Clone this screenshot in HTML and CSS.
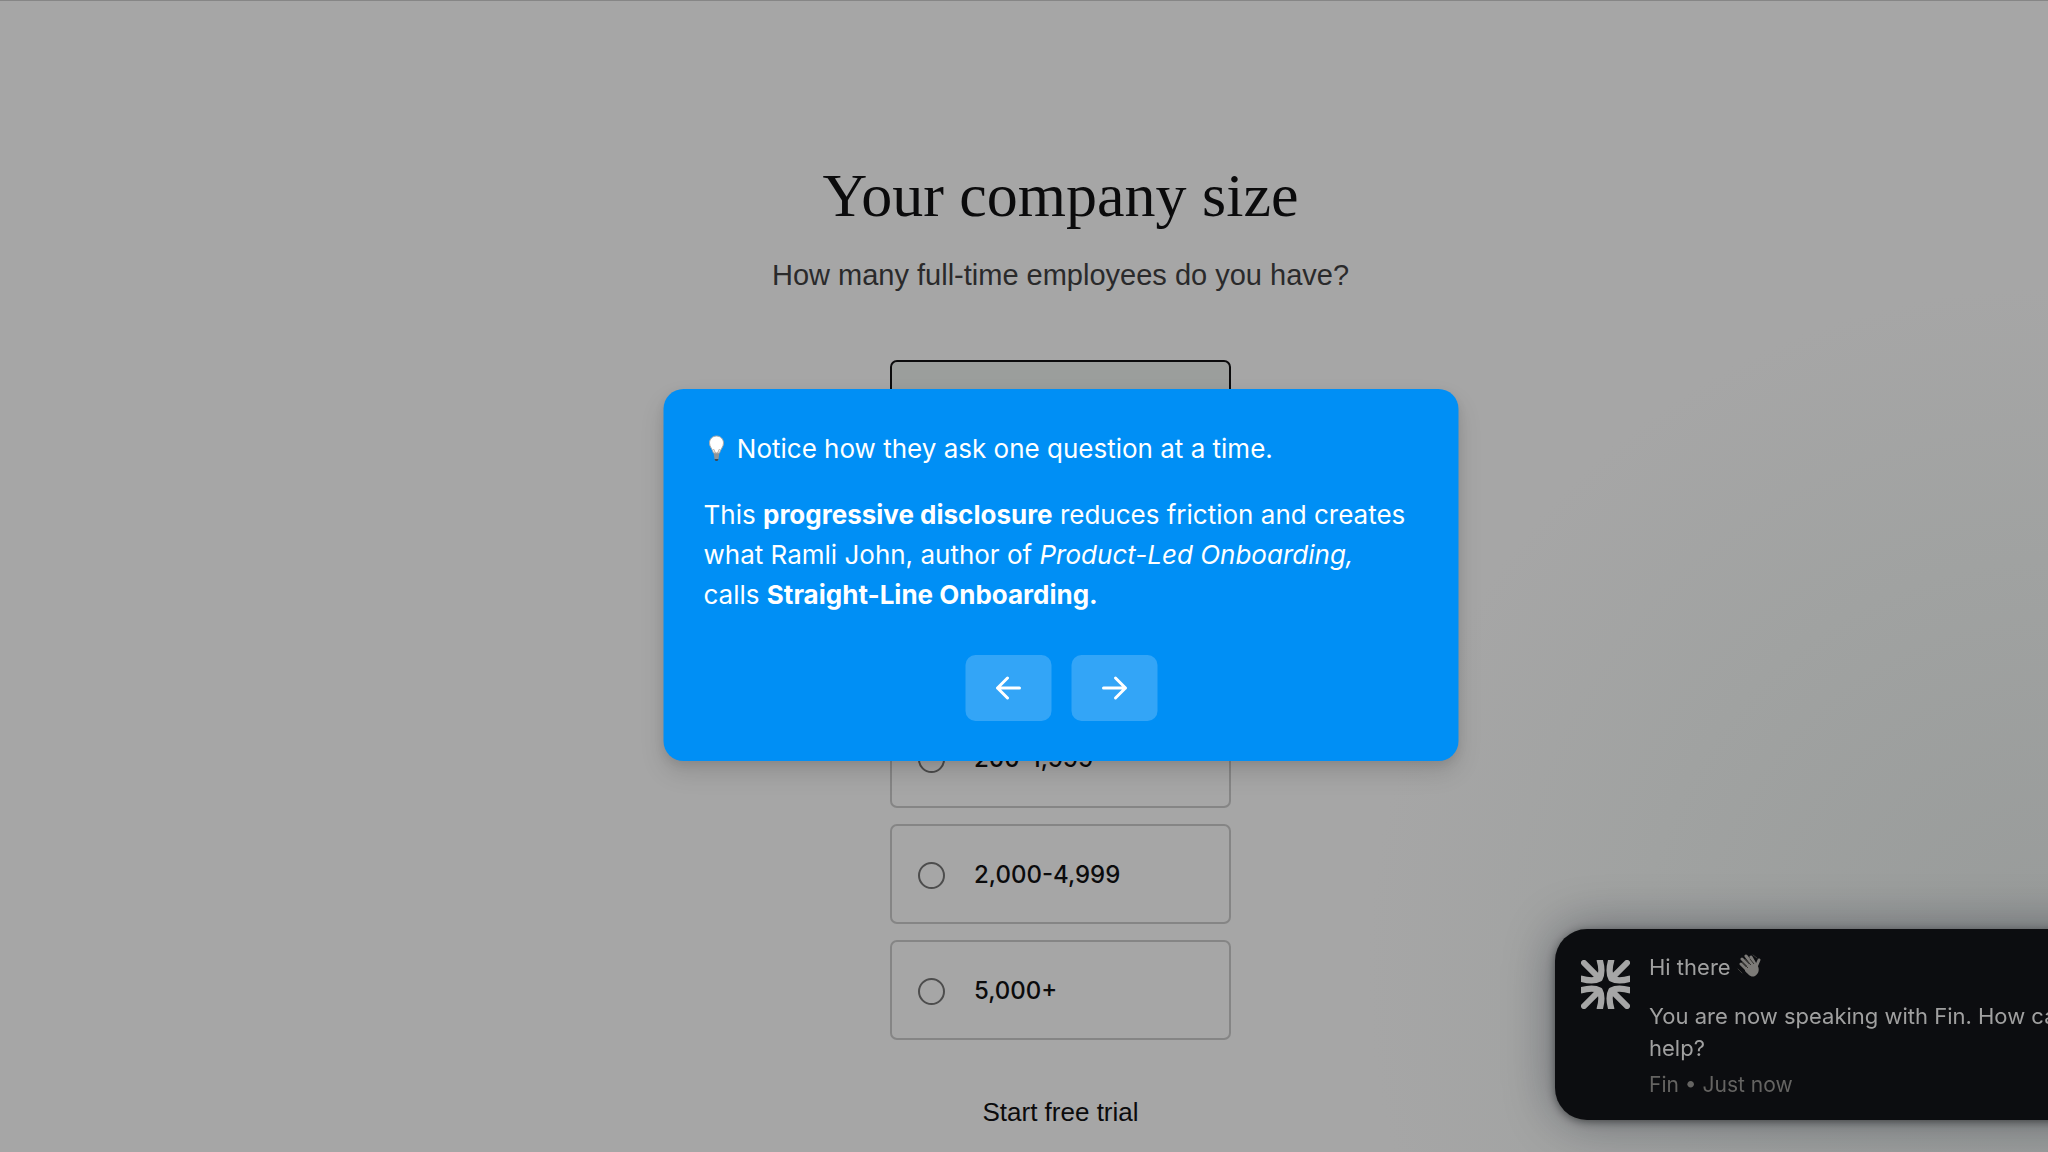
FILE: index.html
```html
<!DOCTYPE html>
<html lang="en">
<head>
  <meta charset="utf-8">
  <meta name="viewport" content="width=device-width, initial-scale=1">
  <title>Your company size</title>
  <link rel="stylesheet" href="styles.css">
</head>
<body>
  <main class="page">
    <h1 class="title">Your company size</h1>
    <p class="subtitle" id="question">How many full-time employees do you have?</p>
    <form class="form">
      <div class="options" role="radiogroup" aria-labelledby="question">
        <label class="option option-selected"><input class="radio" type="radio" name="size" aria-label="1-4" checked></label>
        <label class="option"><input class="radio" type="radio" name="size" aria-label="5-49"></label>
        <label class="option"><input class="radio" type="radio" name="size" aria-label="50-199"></label>
        <label class="option"><input class="radio" type="radio" name="size"><span>200-1,999</span></label>
        <label class="option"><input class="radio" type="radio" name="size"><span>2,000-4,999</span></label>
        <label class="option"><input class="radio" type="radio" name="size"><span>5,000+</span></label>
      </div>
      <button class="start" type="button">Start free trial</button>
    </form>
  </main>

  <aside class="chat">
    <svg class="chat-logo" viewBox="0 0 148 148" aria-hidden="true">
      <defs>
        <g id="ray" fill="none" stroke="#a6a6a6">
          <path stroke-width="18" stroke-linecap="round" d="M9 9L52 52"/>
          <path stroke-width="19" d="M56 -2C63 22 63 44 56 56C44 63 22 63 -2 56"/>
        </g>
      </defs>
      <use href="#ray"/>
      <use href="#ray" transform="matrix(-1 0 0 1 148 0)"/>
      <use href="#ray" transform="matrix(1 0 0 -1 0 148)"/>
      <use href="#ray" transform="matrix(-1 0 0 -1 148 148)"/>
    </svg>
    <div class="chat-body">
      <p class="chat-greeting">Hi there
        <svg class="wave" viewBox="0 0 24 24" aria-hidden="true">
          <g fill="none" stroke="#7d7b78" stroke-linecap="round">
            <path stroke-width="3" d="M4 10L11 17M5 5L13 13M9 2L16 11M14 3L18 10"/>
            <path stroke-width="3" d="M19 13L22 6"/>
            <path stroke="#3c3b39" stroke-width="1" d="M1 15L5 19M16 1L20 4"/>
          </g>
          <path fill="#7d7b78" d="M8 14L15 8L20 11C23 14 22 20 18 22C14 24 11 20 8 17Z"/>
          <path fill="none" stroke="#34332f" stroke-width="1" d="M5 8L11 14M8 5L14 11M13 5L17 10"/>
        </svg>
      </p>
      <p class="chat-message">You are now speaking with Fin. How can I help?</p>
      <p class="chat-meta">Fin • Just now</p>
    </div>
  </aside>

  <section class="tip" role="dialog" aria-label="Tip">
    <p class="tip-text"><svg class="bulb" viewBox="0 0 26 26" aria-hidden="true">
        <path fill="#8d9499" d="M10 17H16L15 24Q13 27 11 24Z"/>
        <path fill="#fff" stroke="#a9a9a9" stroke-width="1" d="M13 1C9 1 6 4 6 8C6 12 9 14 10 18H16C17 14 20 12 20 8C20 4 17 1 13 1Z"/>
        <path fill="none" stroke="#b9a999" stroke-width="1" d="M10 14L12 18M16 14L14 18"/>
        <path fill="#3e4a54" d="M11 24H15L14 26H12Z"/>
      </svg> Notice how they ask one question at a time.</p>
    <p class="tip-text">This <strong>progressive disclosure</strong> reduces friction and creates what Ramli John, author of <em>Product-Led Onboarding,</em> calls <strong>Straight-Line Onboarding.</strong></p>
    <div class="tip-actions">
      <button class="tip-button" type="button" aria-label="Previous">
        <svg class="arrow" viewBox="0 0 26 26" aria-hidden="true"><path d="M24 13H2M12 3L2 13L12 23"/></svg>
      </button>
      <button class="tip-button" type="button" aria-label="Next">
        <svg class="arrow" viewBox="0 0 26 26" aria-hidden="true"><path d="M2 13H24M14 3L24 13L14 23"/></svg>
      </button>
    </div>
  </section>
</body>
</html>
```

FILE: styles.css
```css
* {
  box-sizing: border-box;
}

body {
  margin: 0;
  min-height: 100vh;
  overflow: hidden;
  border-top: 1px solid #868686;
  background:
    radial-gradient(circle 680px at 100% 84%, #989b9a 0%, #a0a2a1 60%, #a6a6a6 100%) #a6a6a6;
  color: #0b0b0c;
  font-family: Inter, "Liberation Sans", sans-serif;
}

h1,
p {
  margin: 0;
  font-weight: 400;
}

button {
  border: 0;
  background: none;
  color: inherit;
  cursor: pointer;
}

.page {
  display: flex;
  flex-direction: column;
  align-items: center;
  padding: 154px 0 0 73px;
}

.title {
  font-family: "Liberation Serif", serif;
  font-size: 62px;
  line-height: 80px;
}

.subtitle {
  margin-top: 20px;
  color: #2a2a2b;
  font-family: "Liberation Sans", sans-serif;
  font-size: 29px;
  line-height: 40px;
}

.form {
  display: flex;
  flex-direction: column;
  align-items: center;
  gap: 52px;
  margin-top: 65px;
}

.options {
  display: flex;
  flex-direction: column;
  gap: 16px;
  width: 341px;
}

.option {
  display: flex;
  align-items: center;
  gap: 29px;
  height: 100px;
  padding: 0 26px;
  border: 2px solid #858585;
  border-radius: 7px;
  font-size: 24px;
  font-weight: 500;
}

.option-selected {
  border-color: #0b0b0c;
  background: #9b9e9c;
}

.radio {
  appearance: none;
  width: 27px;
  height: 27px;
  margin: 2px 0 0;
  border: 2px solid #4d4d4d;
  border-radius: 50%;
}

.start {
  padding: 0;
  font-family: "Liberation Sans", sans-serif;
  font-size: 26px;
  line-height: 40px;
}

/* Tour step, laid over the page */
.tip {
  position: absolute;
  top: 389px;
  left: calc(50% + 37px);
  width: 795px;
  padding: 40px;
  transform: translateX(-50%);
  border-radius: 20px;
  background: #008ff5;
  box-shadow: 0 12px 24px rgba(0, 0, 0, 0.12), 0 4px 10px rgba(0, 0, 0, 0.08);
  color: #fff;
}

.tip-text {
  max-width: 708px;
  font-size: 26px;
  line-height: 40px;
}

.tip-text + .tip-text {
  margin-top: 26px;
}

.tip-text strong {
  font-weight: 700;
}

.bulb {
  width: 26px;
  height: 26px;
  vertical-align: -3px;
}

.tip-actions {
  display: flex;
  justify-content: center;
  gap: 20px;
  margin-top: 40px;
}

.tip-button {
  display: grid;
  place-items: center;
  width: 86px;
  height: 66px;
  border-radius: 10px;
  background: #33a5f7;
}

.arrow {
  width: 26px;
  height: 26px;
  fill: none;
  stroke: #fff;
  stroke-width: 3;
  stroke-linecap: round;
  stroke-linejoin: round;
}

/* Messenger notification, partly beyond the right edge */
.chat {
  position: fixed;
  right: -92px;
  bottom: 32px;
  display: flex;
  gap: 19px;
  width: 585px;
  padding: 22px 24px 19px 26px;
  border-radius: 32px;
  background: #0c0d10;
  box-shadow: 0 2px 8px rgba(0, 0, 0, 0.45), 0 0 50px rgba(10, 14, 30, 0.4);
  color: #a0a0a0;
  font-size: 22px;
  line-height: 32px;
}

.chat-logo {
  flex: none;
  width: 49px;
  height: 49px;
  margin-top: 9px;
}

.wave {
  width: 24px;
  height: 24px;
  vertical-align: -3px;
}

.chat-message {
  margin-top: 17px;
}

.chat-meta {
  margin-top: 5px;
  color: #656462;
  font-size: 21px;
}
```
